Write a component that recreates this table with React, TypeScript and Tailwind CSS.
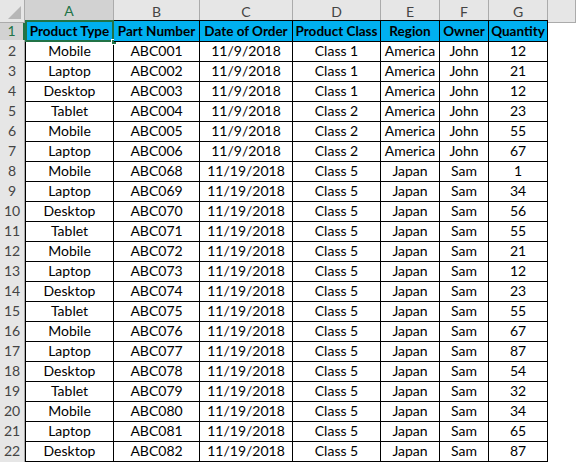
import React from "react";

const COLS = ["A", "B", "C", "D", "E", "F", "G", ""];

const HEAD = ["Product Type", "Part Number", "Date of Order", "Product Class", "Region", "Owner", "Quantity"];

const ROWS: string[][] = [
  ["Mobile", "ABC001", "11/9/2018", "Class 1", "America", "John", "12"],
  ["Laptop", "ABC002", "11/9/2018", "Class 1", "America", "John", "21"],
  ["Desktop", "ABC003", "11/9/2018", "Class 1", "America", "John", "12"],
  ["Tablet", "ABC004", "11/9/2018", "Class 2", "America", "John", "23"],
  ["Mobile", "ABC005", "11/9/2018", "Class 2", "America", "John", "55"],
  ["Laptop", "ABC006", "11/9/2018", "Class 2", "America", "John", "67"],
  ["Mobile", "ABC068", "11/19/2018", "Class 5", "Japan", "Sam", "1"],
  ["Laptop", "ABC069", "11/19/2018", "Class 5", "Japan", "Sam", "34"],
  ["Desktop", "ABC070", "11/19/2018", "Class 5", "Japan", "Sam", "56"],
  ["Tablet", "ABC071", "11/19/2018", "Class 5", "Japan", "Sam", "55"],
  ["Mobile", "ABC072", "11/19/2018", "Class 5", "Japan", "Sam", "21"],
  ["Laptop", "ABC073", "11/19/2018", "Class 5", "Japan", "Sam", "12"],
  ["Desktop", "ABC074", "11/19/2018", "Class 5", "Japan", "Sam", "23"],
  ["Tablet", "ABC075", "11/19/2018", "Class 5", "Japan", "Sam", "55"],
  ["Mobile", "ABC076", "11/19/2018", "Class 5", "Japan", "Sam", "67"],
  ["Laptop", "ABC077", "11/19/2018", "Class 5", "Japan", "Sam", "87"],
  ["Desktop", "ABC078", "11/19/2018", "Class 5", "Japan", "Sam", "54"],
  ["Tablet", "ABC079", "11/19/2018", "Class 5", "Japan", "Sam", "32"],
  ["Mobile", "ABC080", "11/19/2018", "Class 5", "Japan", "Sam", "34"],
  ["Laptop", "ABC081", "11/19/2018", "Class 5", "Japan", "Sam", "65"],
  ["Desktop", "ABC082", "11/19/2018", "Class 5", "Japan", "Sam", "87"],
];

const GRID = "grid grid-cols-[25px_89px_86px_93px_88px_59px_49px_59px_1fr]";

export default function App() {
  return (
    <div className="w-[576px] h-[462px] overflow-hidden bg-white text-[14px] text-black font-['Lato','Liberation_Sans',sans-serif]">
      {/* column letters */}
      <div className={`${GRID} h-[20px]`}>
        <div className="relative bg-[#e6e6e6] border-r border-b border-[#ababab]">
          <div className="absolute right-[3px] bottom-[3px] w-0 h-0 border-l-[13px] border-l-transparent border-b-[13px] border-b-[#b6b6b6]" />
        </div>
        {COLS.map((c, i) => (
          <div
            key={i}
            className={`flex items-center justify-center border-r ${
              c === "A"
                ? "bg-[#d2d2d2] text-[#217346] border-b-2 border-b-[#217346] border-r-[#ababab]"
                : "bg-[#e6e6e6] text-[#444] border-b border-[#ababab]"
            }`}
          >
            {c}
          </div>
        ))}
      </div>

      {/* header row */}
      <div className={`${GRID} h-[20px]`}>
        <div className="flex items-center justify-center bg-[#d2d2d2] text-[#217346] border-r-2 border-r-[#217346] border-b border-b-[#ababab]">
          1
        </div>
        {HEAD.map((h, i) => (
          <div
            key={h}
            className={`relative flex items-center justify-center bg-[#00b0f0] font-bold text-[13.5px] whitespace-nowrap border-r border-t border-b border-black ${
              i === 0 ? "border-l" : ""
            }`}
          >
            {h}
            {i === 0 && (
              <>
                <div className="absolute -left-[1px] -top-[1px] -right-[1px] -bottom-[1px] border-2 border-[#217346]" />
                <div className="absolute -right-[4px] -bottom-[4px] w-[6px] h-[6px] bg-[#217346] border border-white" />
              </>
            )}
          </div>
        ))}
        <div />
      </div>

      {ROWS.map((r, ri) => (
        <div key={ri} className={`${GRID} h-[20px]`}>
          <div className="flex items-center justify-center bg-[#e6e6e6] text-[#444] border-r border-b border-[#ababab]">
            {ri + 2}
          </div>
          {r.map((v, ci) => (
            <div
              key={ci}
              className={`flex items-center justify-center whitespace-nowrap border-r border-b border-black ${
                ci === 0 ? "border-l" : ""
              }`}
            >
              {v}
            </div>
          ))}
          <div />
        </div>
      ))}

      {/* partly visible row 23 */}
      <div className={`${GRID} h-[20px]`}>
        <div className="bg-[#e6e6e6] border-r border-[#ababab]" />
        {HEAD.map((h, ci) => (
          <div key={h} className={`border-r border-black ${ci === 0 ? "border-l" : ""}`} />
        ))}
        <div />
      </div>
    </div>
  );
}
